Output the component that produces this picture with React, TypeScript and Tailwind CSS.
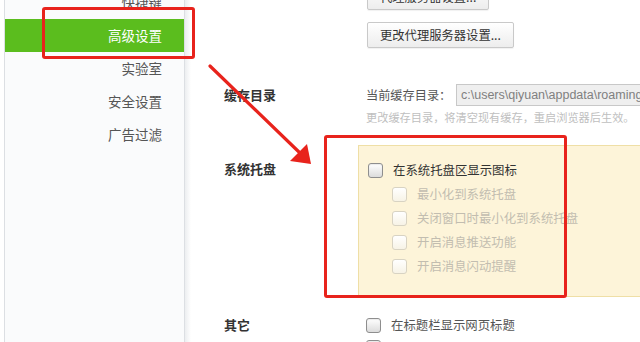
import React from "react";

const CJK = { fontFamily: '"Noto Sans CJK SC", "Noto Sans", sans-serif' };

function Box({ disabled }: { disabled?: boolean }) {
  return (
    <span
      className={
        disabled
          ? "inline-block w-[15px] h-[15px] rounded-[3px] border border-[#d8d3c3] bg-gradient-to-b from-[#ffffff] to-[#f7f3e6] shrink-0"
          : "inline-block w-[15px] h-[15px] rounded-[3px] border border-[#8e8e8e] bg-gradient-to-b from-[#ffffff] to-[#dcdcdc] shadow-[inset_0_1px_1px_rgba(0,0,0,0.08)] shrink-0"
      }
    />
  );
}

function Btn({ children }: { children: React.ReactNode }) {
  return (
    <div className="h-[26px] inline-flex items-center px-[12px] border border-[#c9c9c9] rounded-[2px] bg-gradient-to-b from-[#ffffff] to-[#ededed] text-[12.3px] text-[#333] shadow-[0_1px_1px_rgba(0,0,0,0.06)]">
      {children}
    </div>
  );
}

export default function App() {
  const menu = [
    { t: "快捷键" },
    { t: "高级设置", active: true },
    { t: "实验室" },
    { t: "安全设置" },
    { t: "广告过滤" },
  ];
  return (
    <div className="w-[640px] h-[342px] overflow-hidden relative flex bg-white" style={CJK}>
      {/* sidebar */}
      <div className="ml-[4px] w-[181px] h-full border-l border-r border-[#dcdfe3] bg-[#fafbfc] flex flex-col shrink-0">
        <div className="-mt-[14px] flex flex-col">
          {menu.map((m) => (
            <div
              key={m.t}
              className={
                m.active
                  ? "h-[33px] flex items-center justify-end pr-[22px] bg-[#5bbd1e] text-white text-[13.5px]"
                  : "h-[33px] flex items-center justify-end pr-[22px] text-[#555] text-[13.5px]"
              }
            >
              {m.t}
            </div>
          ))}
        </div>
      </div>
      <div className="w-[6px] h-full bg-gradient-to-r from-[#eceef0] to-[#ffffff] shrink-0" />

      {/* main */}
      <div className="flex-1 flex flex-col pl-[33px] min-w-0">
        <div className="-mt-[16px] flex">
          <div className="w-[143px] shrink-0" />
          <div className="flex flex-col items-start gap-[12px]">
            <Btn>代理服务器设置...</Btn>
            <Btn>更改代理服务器设置...</Btn>
          </div>
        </div>

        <div className="mt-[36px] flex items-center h-[22px]">
          <div className="w-[142px] shrink-0 text-[13px] font-bold text-[#333]">缓存目录</div>
          <div className="flex items-center flex-1 min-w-0">
            <span className="text-[12.2px] text-[#555] w-[90px] shrink-0">当前缓存目录：</span>
            <div
              className="h-[22px] flex-1 -mr-[20px] border border-[#c8c8c8] bg-[#efefef] flex items-center pl-[4px] text-[12.5px] text-[#808080] whitespace-nowrap overflow-hidden"
              style={{ fontFamily: '"Liberation Sans", Arial, sans-serif' }}
            >
              c:\users\qiyuan\appdata\roaming\
            </div>
          </div>
        </div>
        <div className="mt-[4px] flex h-[14px] items-center">
          <div className="w-[142px] shrink-0" />
          <span className="text-[11.2px] text-[#c0c0c0] whitespace-nowrap">更改缓存目录，将清空现有缓存，重启浏览器后生效。</span>
        </div>

        <div className="mt-[21px] flex">
          <div className="w-[134px] shrink-0 pt-[14px] text-[13px] font-bold text-[#333]">系统托盘</div>
          <div className="flex-1 -mr-[10px] h-[152px] border border-[#efdfa6] bg-[#fdf4d9] pl-[9px] pt-[12px] flex flex-col">
            <div className="h-[24px] flex items-center gap-[10px] text-[12.4px] text-[#333]">
              <Box />
              <span>在系统托盘区显示图标</span>
            </div>
            {["最小化到系统托盘", "关闭窗口时最小化到系统托盘", "开启消息推送功能", "开启消息闪动提醒"].map((t) => (
              <div key={t} className="h-[24px] pl-[24px] flex items-center gap-[10px] text-[12.4px] text-[#c2bdb0]">
                <Box disabled />
                <span>{t}</span>
              </div>
            ))}
          </div>
        </div>

        <div className="mt-[18px] flex">
          <div className="w-[142px] shrink-0 h-[20px] flex items-center text-[13px] font-bold text-[#333]">其它</div>
          <div className="flex flex-col">
            <div className="h-[20px] flex items-center gap-[10px] text-[12.4px] text-[#555]">
              <Box />
              <span>在标题栏显示网页标题</span>
            </div>
            <div className="h-[20px] flex items-start pt-[5px] gap-[10px]">
              <Box />
            </div>
          </div>
        </div>
      </div>

      {/* annotations */}
      <div className="absolute left-[42px] top-[7px] w-[153px] h-[52px] border-[3px] border-[#e8231c] rounded-[3px] pointer-events-none" />
      <div className="absolute left-[324px] top-[135px] w-[243px] h-[163px] border-[3px] border-[#e8231c] rounded-[3px] pointer-events-none" />
      <svg className="absolute left-0 top-0 pointer-events-none" width="640" height="342" viewBox="0 0 640 342">
        <line x1="210" y1="66" x2="300" y2="153" stroke="#e8231c" strokeWidth="3.2" strokeLinecap="round" />
        <polygon points="311,164 290,161 307,144" fill="#e8231c" />
      </svg>
    </div>
  );
}
